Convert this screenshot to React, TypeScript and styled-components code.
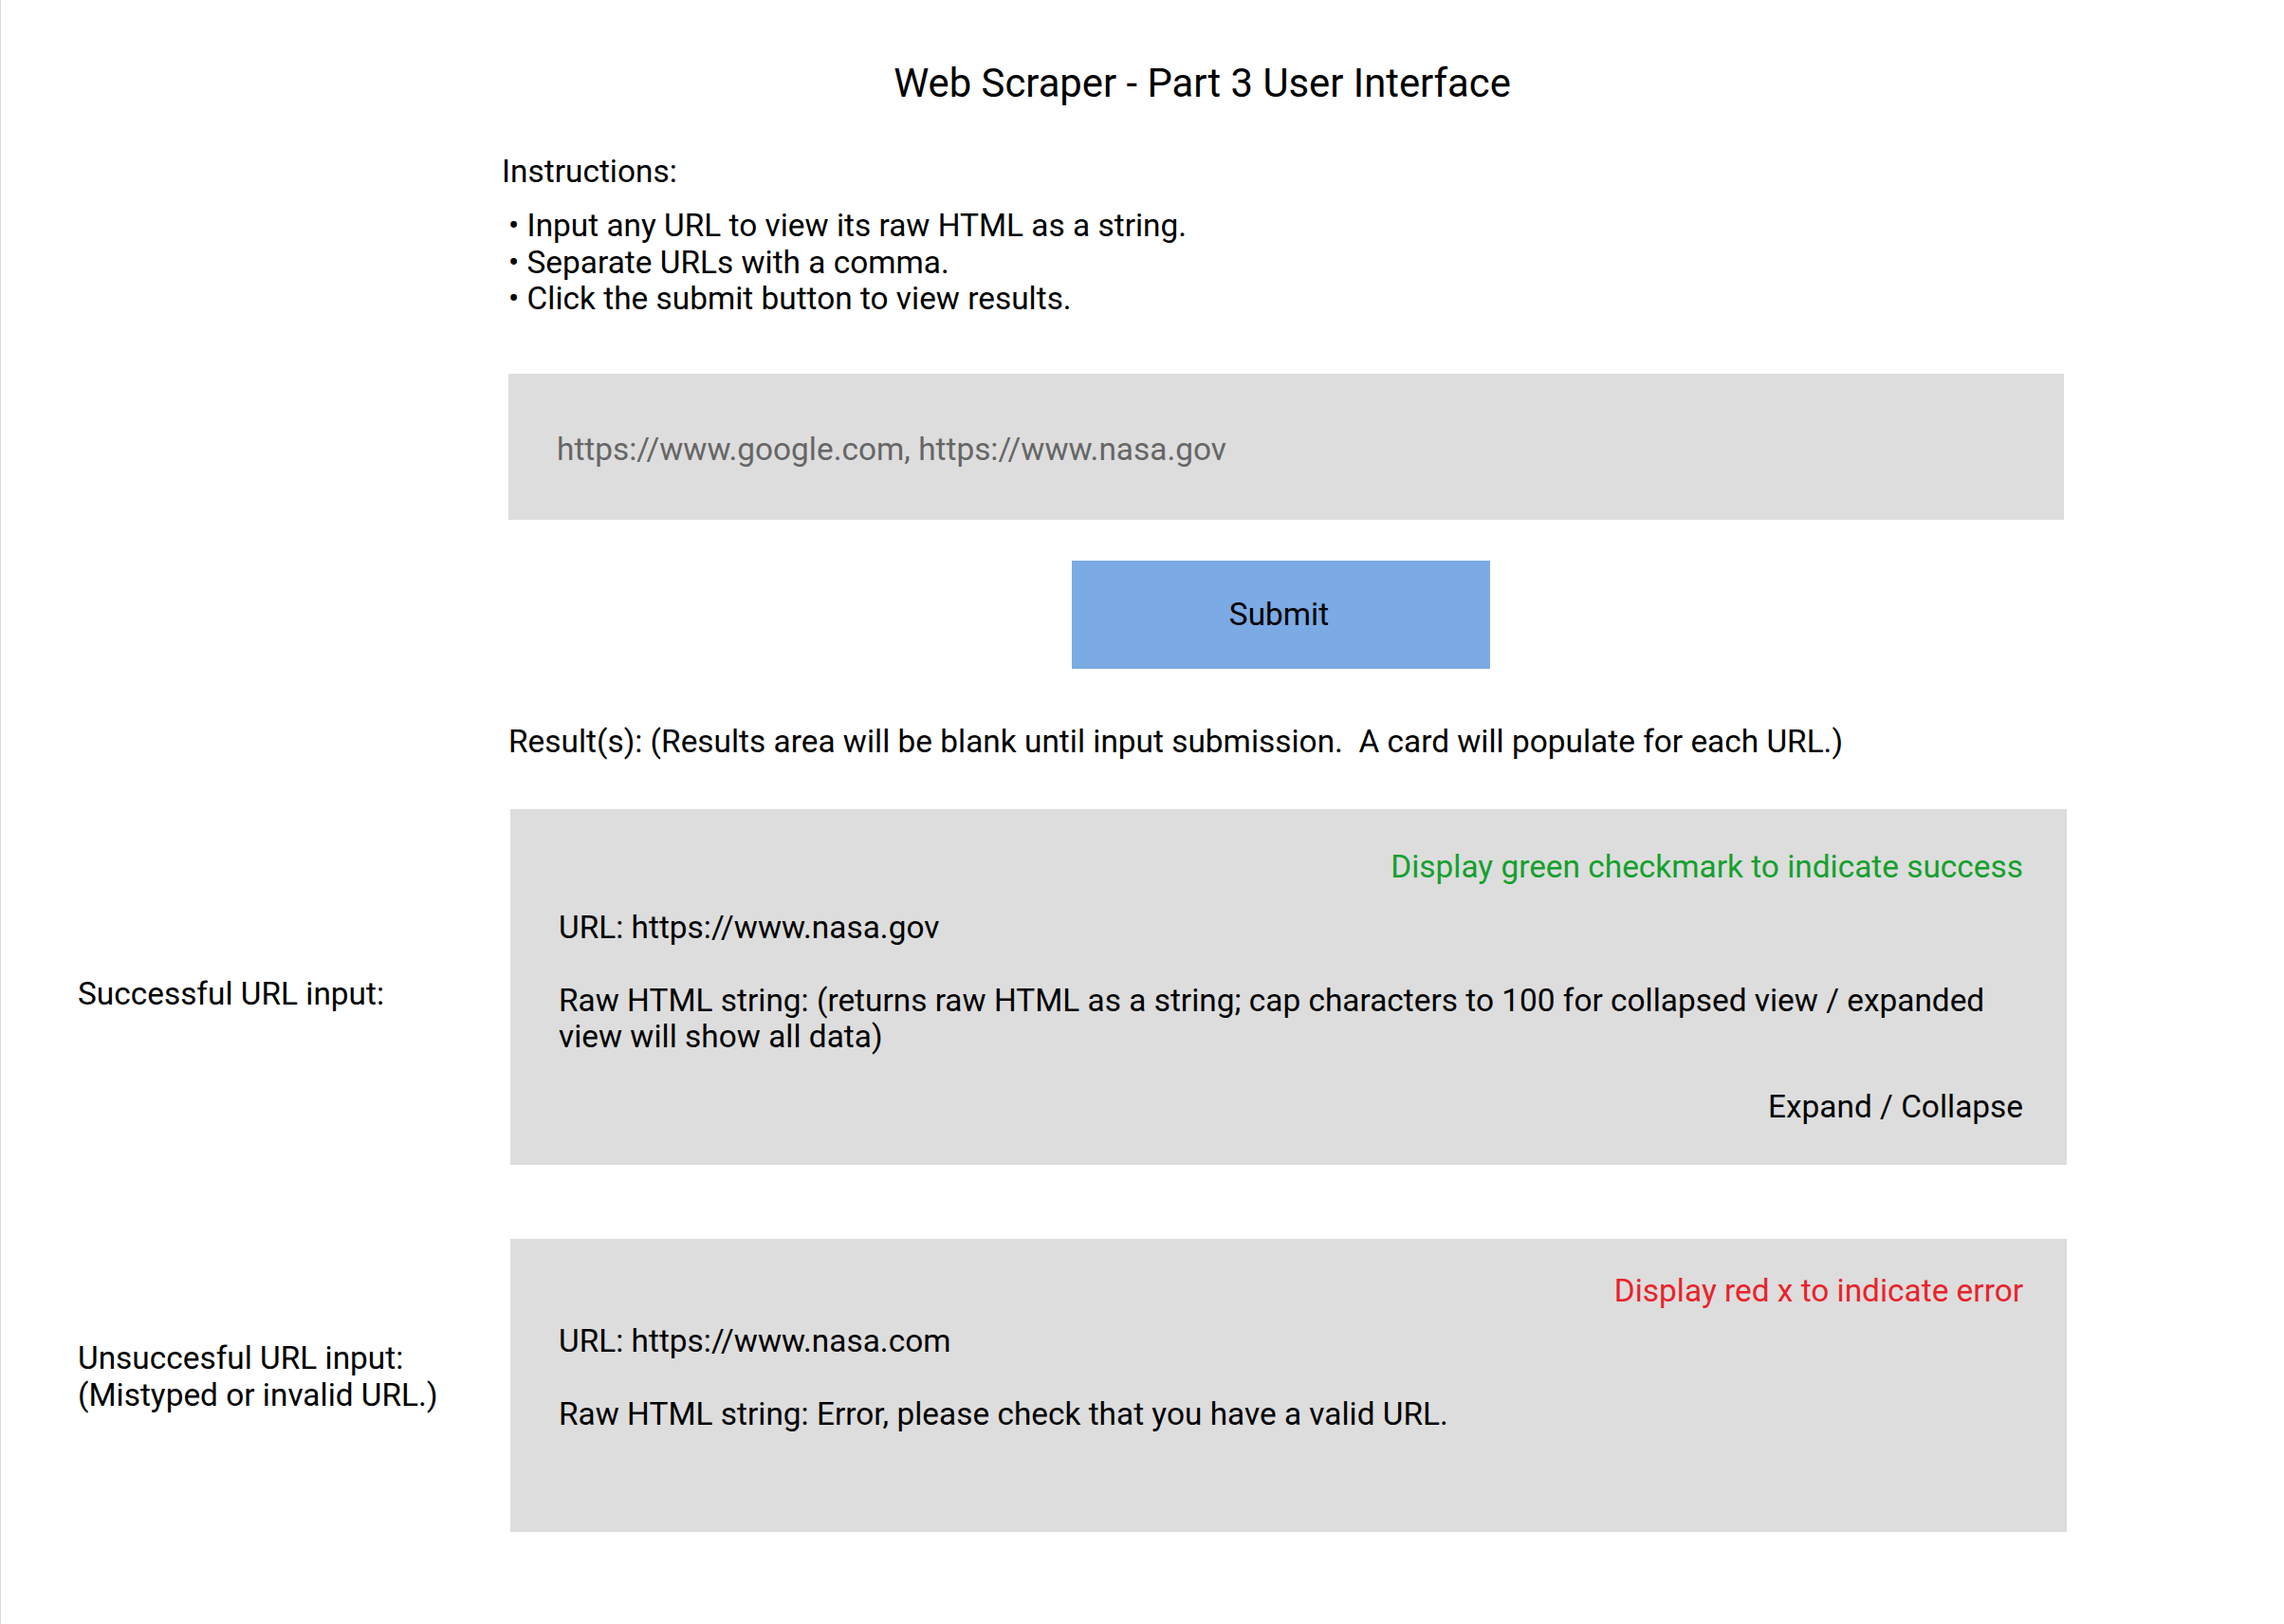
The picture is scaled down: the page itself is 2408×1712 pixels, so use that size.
import React from "react";
import styled, { createGlobalStyle } from "styled-components";

const GlobalStyle = createGlobalStyle`
  html, body {
    margin: 0;
    padding: 0;
    background: #ffffff;
  }
  body {
    font-family: Roboto, "Liberation Sans", Arial, sans-serif;
    color: #000000;
  }
  * { box-sizing: border-box; }
`;

const Page = styled.div`
  min-height: 100vh;
  border-left: 1px solid #d9d9d9;
  display: flex;
  flex-direction: column;
  font-size: 33.4px;
  line-height: 38.4px;
`;

const Title = styled.h1`
  margin: 64px 0 0 0;
  padding-left: 126px;
  text-align: center;
  font-size: 41.8px;
  font-weight: 400;
  line-height: 48px;
`;

const Main = styled.section`
  margin-left: 535px;
  width: 1641px;
  display: flex;
  flex-direction: column;
`;

const Heading = styled.div`
  margin: 50px 0 0 -7px;
`;

const BulletList = styled.ul`
  list-style: none;
  margin: 19px 0 0 0;
  padding: 0;
`;

const Bullet = styled.li`
  margin: 0;
`;

const UrlInput = styled.input`
  margin-top: 59px;
  height: 154px;
  width: 1640px;
  border: none;
  outline: none;
  background: #dddddd;
  padding: 6px 0 0 51px;
  font-family: Roboto, "Liberation Sans", Arial, sans-serif;
  font-size: 33.4px;
  color: #000;
  &::placeholder {
    color: #666666;
  }
`;

const SubmitButton = styled.button`
  margin: 43px 0 0 594px;
  width: 441px;
  height: 114px;
  border: none;
  background: #7baae4;
  font-family: Roboto, "Liberation Sans", Arial, sans-serif;
  font-size: 33.4px;
  color: #000;
  cursor: pointer;
  padding: 0 4px 0 0;
`;

const ResultsNote = styled.div`
  margin: 58px 0 0 0;
  white-space: pre;
`;

const ResultRow = styled.div<{ $gap: number }>`
  display: grid;
  grid-template-columns: 537px 1641px;
  margin-top: ${(p) => p.$gap}px;
`;

const RowLabel = styled.div<{ $shift: number }>`
  align-self: center;
  padding-left: 81px;
  transform: translateY(${(p) => p.$shift}px);
`;

const Card = styled.div<{ $height: number; $top: number }>`
  background: #dddddd;
  height: ${(p) => p.$height}px;
  padding: ${(p) => p.$top}px 46px 0 51px;
  display: flex;
  flex-direction: column;
`;

const Status = styled.div<{ $tone: "ok" | "error" }>`
  text-align: right;
  color: ${(p) => (p.$tone === "ok" ? "#14a02c" : "#e8232b")};
`;

const CardLine = styled.p<{ $gap: number }>`
  margin: ${(p) => p.$gap}px 0 0 0;
`;

const Toggle = styled.div`
  margin-top: 35px;
  text-align: right;
`;

export default function App() {
  return (
    <>
      <GlobalStyle />
      <Page>
        <Title>Web Scraper - Part 3 User Interface</Title>
        <Main>
          <Heading>Instructions:</Heading>
          <BulletList>
            <Bullet>• Input any URL to view its raw HTML as a string.</Bullet>
            <Bullet>• Separate URLs with a comma.</Bullet>
            <Bullet>• Click the submit button to view results.</Bullet>
          </BulletList>
          <UrlInput
            type="text"
            placeholder="https://www.google.com, https://www.nasa.gov"
          />
          <SubmitButton type="button">Submit</SubmitButton>
          <ResultsNote>
            {"Result(s): (Results area will be blank until input submission.  A card will populate for each URL.)"}
          </ResultsNote>
        </Main>
        <ResultRow $gap={52}>
          <RowLabel $shift={8}>Successful URL input:</RowLabel>
          <Card $height={375} $top={42}>
            <Status $tone="ok">Display green checkmark to indicate success</Status>
            <CardLine $gap={26}>URL: https://www.nasa.gov</CardLine>
            <CardLine $gap={38}>
              Raw HTML string: (returns raw HTML as a string; cap characters to
              100 for collapsed view / expanded view will show all data)
            </CardLine>
            <Toggle>Expand / Collapse</Toggle>
          </Card>
        </ResultRow>
        <ResultRow $gap={78}>
          <RowLabel $shift={-9}>
            Unsuccesful URL input:
            <br />
            (Mistyped or invalid URL.)
          </RowLabel>
          <Card $height={309} $top={36}>
            <Status $tone="error">Display red x to indicate error</Status>
            <CardLine $gap={15}>URL: https://www.nasa.com</CardLine>
            <CardLine $gap={38}>
              Raw HTML string: Error, please check that you have a valid URL.
            </CardLine>
          </Card>
        </ResultRow>
      </Page>
    </>
  );
}
